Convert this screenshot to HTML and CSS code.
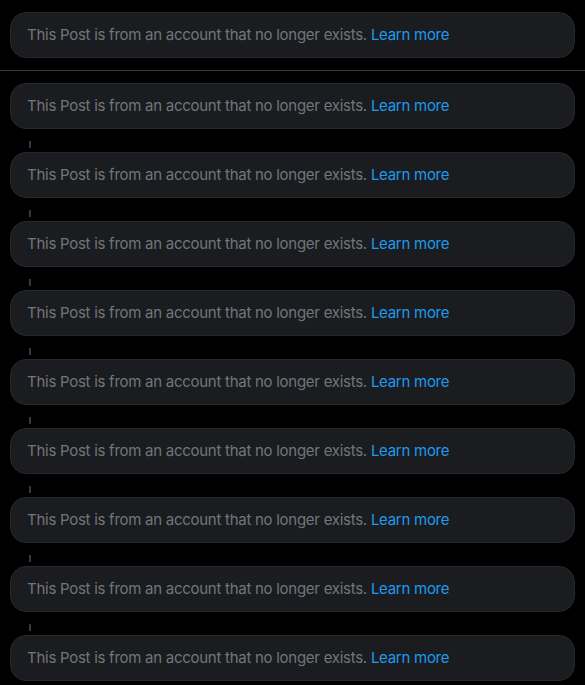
FILE: index.html
```html
<!DOCTYPE html>
<html>
<head>
<meta charset="utf-8">
<link rel="stylesheet" href="styles.css">
</head>
<body>
<div class="top">
  <div class="card">This Post is from an account that no longer exists. <a class="link">Learn more</a></div>
</div>
<div class="divider"></div>
<div class="thread">
  <div class="card">This Post is from an account that no longer exists. <a class="link">Learn more</a></div>
  <div class="tick"></div>
  <div class="card">This Post is from an account that no longer exists. <a class="link">Learn more</a></div>
  <div class="tick"></div>
  <div class="card">This Post is from an account that no longer exists. <a class="link">Learn more</a></div>
  <div class="tick"></div>
  <div class="card">This Post is from an account that no longer exists. <a class="link">Learn more</a></div>
  <div class="tick"></div>
  <div class="card">This Post is from an account that no longer exists. <a class="link">Learn more</a></div>
  <div class="tick"></div>
  <div class="card">This Post is from an account that no longer exists. <a class="link">Learn more</a></div>
  <div class="tick"></div>
  <div class="card">This Post is from an account that no longer exists. <a class="link">Learn more</a></div>
  <div class="tick"></div>
  <div class="card">This Post is from an account that no longer exists. <a class="link">Learn more</a></div>
  <div class="tick"></div>
  <div class="card">This Post is from an account that no longer exists. <a class="link">Learn more</a></div>
</div>
</body>
</html>
```
FILE: styles.css
```css
html, body {
  margin: 0;
  padding: 0;
  background: #000;
  font-family: Inter, "Noto Sans", sans-serif;
}
.top {
  padding: 12px 10px 12px 10px;
}
.divider {
  height: 1px;
  background: #3a3d41;
}
.thread {
  padding: 12px 10px 0 10px;
  display: flex;
  flex-direction: column;
}
.card {
  box-sizing: border-box;
  height: 46px;
  display: flex;
  align-items: center;
  padding: 0 16px 1px 16px;
  background: #1b1c1f;
  border: 1px solid #26282c;
  border-radius: 16px;
  color: #71767b;
  font-size: 15px;
  letter-spacing: -0.27px;
  white-space: pre;
}
.link {
  color: #1d9bf0;
  text-decoration: none;
}
.tick {
  width: 2px;
  height: 7px;
  background: #34373b;
  margin: 12px 0 4px 19px;
}
```
